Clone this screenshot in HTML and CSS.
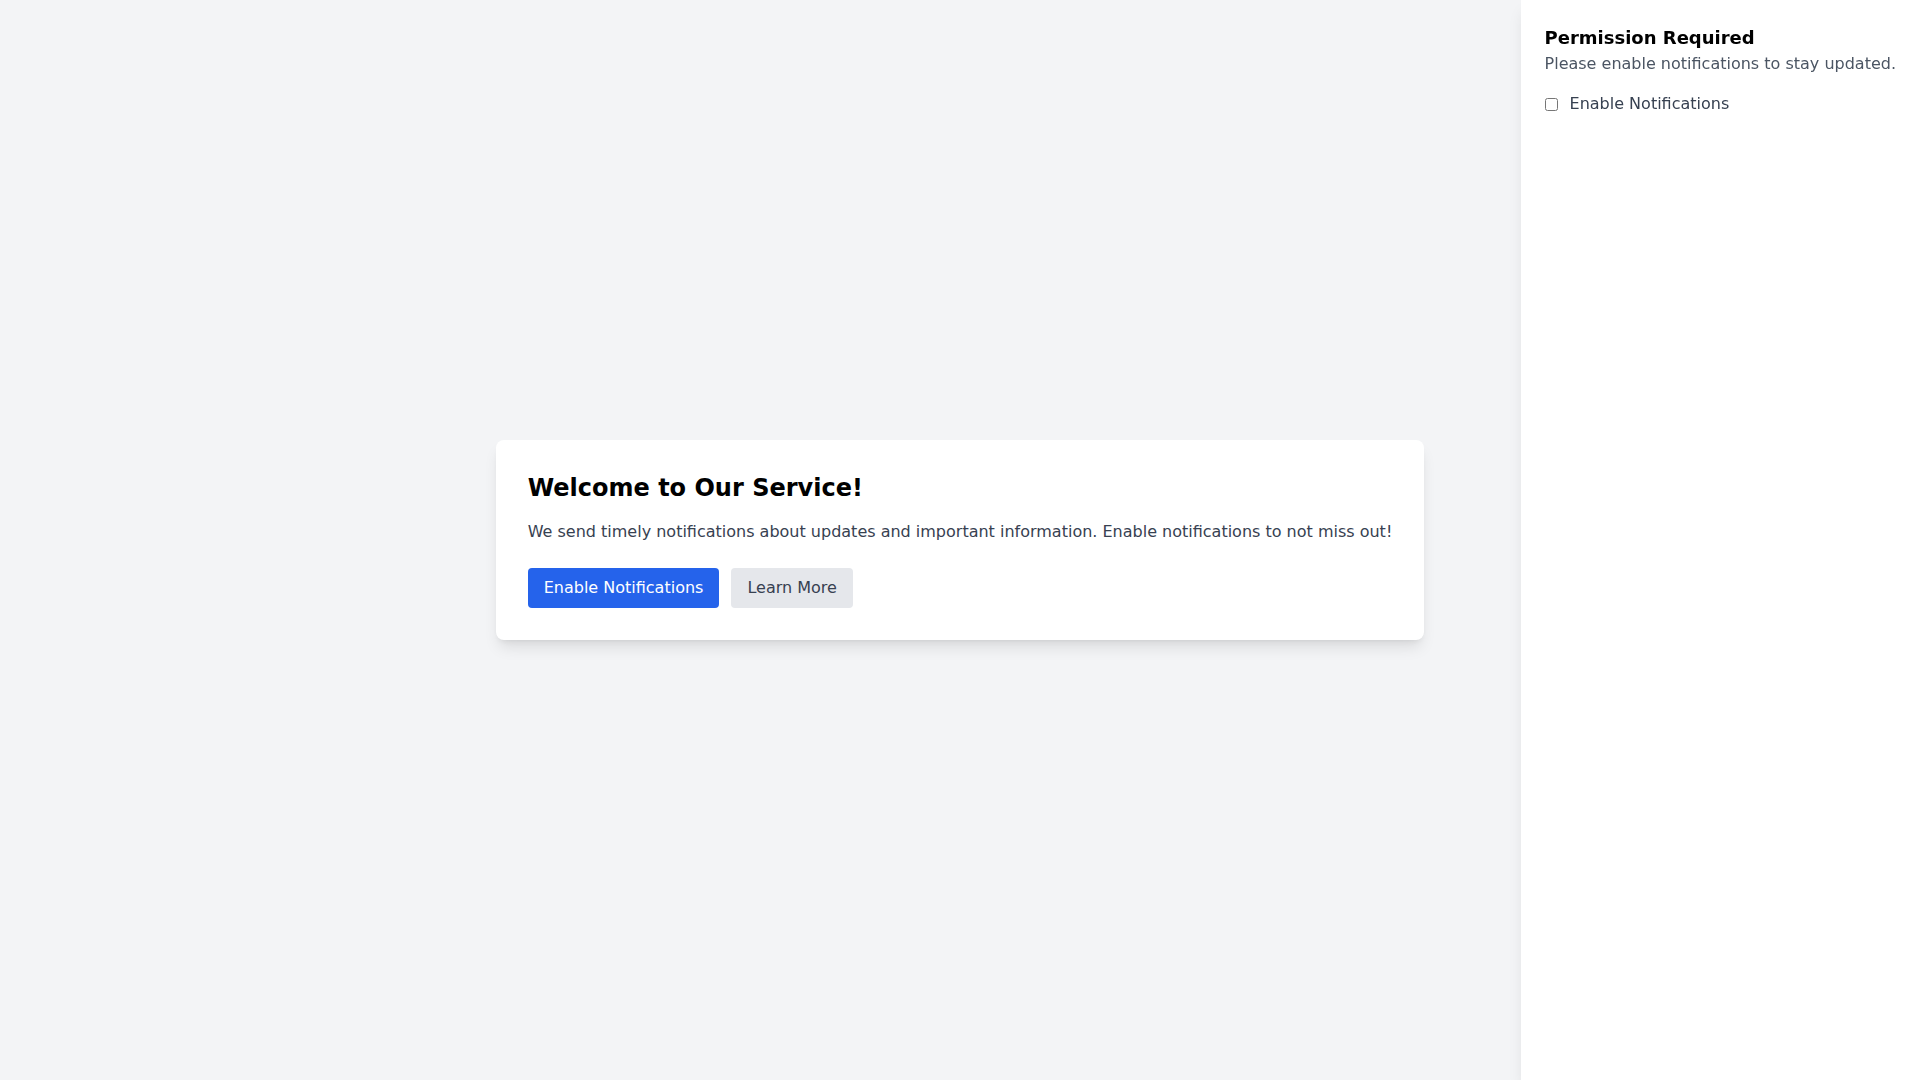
FILE: index.html
```html
<!DOCTYPE html>
<html lang="en">
<head>
<meta charset="utf-8">
<title>Welcome</title>
<link rel="stylesheet" href="styles.css">
</head>
<body>
<main class="main">
  <section class="card">
    <h1 class="card-title">Welcome to Our Service!</h1>
    <p class="card-text">We send timely notifications about updates and important information. Enable notifications to not miss out!</p>
    <div class="actions">
      <button class="btn btn-primary">Enable Notifications</button>
      <button class="btn btn-secondary">Learn More</button>
    </div>
  </section>
</main>
<aside class="sidebar">
  <h2 class="side-title">Permission Required</h2>
  <p class="side-text">Please enable notifications to stay updated.</p>
  <label class="check-row">
    <input type="checkbox" class="check">
    <span class="check-label">Enable Notifications</span>
  </label>
</aside>
</body>
</html>
```

FILE: styles.css
```css
* { box-sizing: border-box; }
html, body { margin: 0; padding: 0; }
body {
  font-family: "DejaVu Sans", sans-serif;
  background: #f3f4f6;
  height: 1080px;
  overflow: hidden;
}
.main {
  height: 100vh;
  display: flex;
  align-items: center;
  justify-content: center;
}
.card {
  background: #ffffff;
  border-radius: 8px;
  padding: 32px;
  box-shadow: 0 10px 15px -3px rgba(0,0,0,0.1), 0 4px 6px -4px rgba(0,0,0,0.1);
}
.card-title {
  margin: 0 0 16px;
  font-size: 24px;
  line-height: 32px;
  font-weight: 700;
  color: #000;
}
.card-text {
  margin: 0 0 24px;
  font-size: 16px;
  line-height: 24px;
  color: #374151;
}
.actions { display: flex; gap: 12px; }
.btn {
  font-family: inherit;
  font-size: 16px;
  line-height: 24px;
  padding: 8px 16px;
  border: none;
  border-radius: 4px;
  cursor: pointer;
}
.btn-primary { background: #2563eb; color: #fff; }
.btn-secondary { background: #e5e7eb; color: #374151; }
.sidebar {
  position: fixed;
  top: 0;
  right: 0;
  height: 100vh;
  background: #fff;
  padding: 24px;
  box-shadow: 0 10px 15px -3px rgba(0,0,0,0.1), 0 4px 6px -4px rgba(0,0,0,0.1);
}
.side-title {
  margin: 0;
  font-size: 18px;
  line-height: 28px;
  font-weight: 700;
  color: #000;
}
.side-text {
  margin: 0;
  font-size: 16px;
  line-height: 24px;
  color: #4b5563;
}
.check-row {
  margin-top: 16px;
  display: flex;
  align-items: center;
  font-size: 16px;
  line-height: 24px;
  color: #374151;
}
.check { margin: 0; width: 13px; height: 13px; }
.check-label { margin-left: 12px; }
```
